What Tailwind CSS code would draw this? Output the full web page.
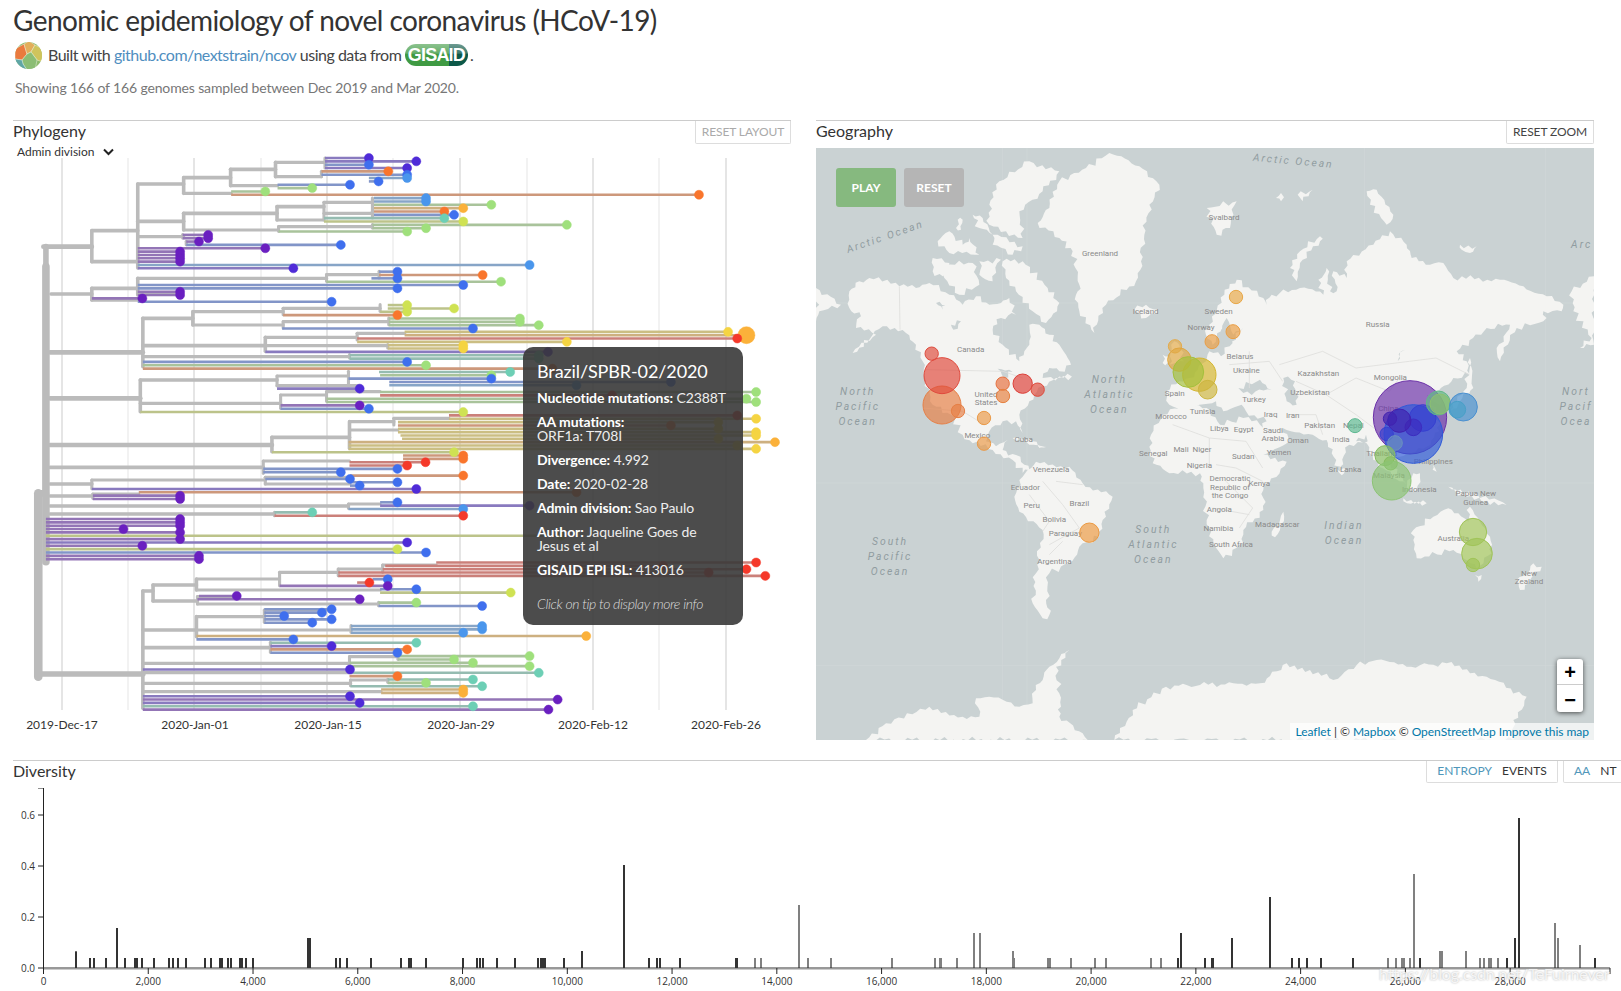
<!DOCTYPE html>
<html lang="en">
  <head>
    <meta charset="UTF-8" />
    <meta name="viewport" content="width=device-width, initial-scale=1.0" />
    <title>Genomic epidemiology of novel coronavirus (HCoV-19)</title>
    <script src="https://cdn.jsdelivr.net/npm/@tailwindcss/browser@4"></script>
  </head>
  <body class="bg-white font-['Lato',sans-serif] text-[#333] w-[1621px] h-[991px] overflow-hidden">
    <!-- Header -->
    <header class="pl-[13px]">
      <h1 class="h-[40px] flex items-center text-[28px] leading-none tracking-[-0.58px] text-[#333]">
        Genomic epidemiology of novel coronavirus (HCoV-19)
      </h1>
      <div class="h-[30px] flex items-center text-[16px] tracking-[-0.5px] text-[#444] pl-[2px]">
        <svg class="w-[27px] h-[27px] mr-[6px]" viewBox="0 0 27 27">
          <clipPath id="logo-clip"><circle cx="13.5" cy="13.5" r="13.5" /></clipPath>
          <g clip-path="url(#logo-clip)" stroke="#fff" stroke-width="0.4">
            <rect width="27" height="27" fill="#8dbb6c" />
            <polygon fill="#ea7a3e" points="0,7 9,2 12,12 7,18 0,17" />
            <polygon fill="#e2ae5a" points="9,2 14,-1 20,3 16,10 12,12" />
            <polygon fill="#cfc45c" points="20,3 28,7 28,20 22,18 16,10" />
            <polygon fill="#8bbd74" points="12,12 16,10 22,18 20,28 12,28 8,22 7,18" />
            <polygon fill="#5fa6a6" points="0,17 7,18 8,22 12,28 0,28" />
          </g>
        </svg>
        <span>Built with&nbsp;</span><a class="text-[#4f8ec0]">github.com/nextstrain/ncov</a><span>&nbsp;using data from&nbsp;</span>
        <span class="w-[63px] h-[22px] rounded-full flex items-center justify-center text-white font-bold text-[18px] font-['Liberation_Sans',sans-serif] tracking-[-0.8px] bg-[linear-gradient(180deg,#ffffff66_0%,#ffffff33_42%,#ffffff00_46%),linear-gradient(90deg,#3f9a43_70%,#0c5848_70%)]">GISAID</span>
        <span class="ml-[2px]">.</span>
      </div>
      <p class="h-[34px] flex items-center text-[14px] tracking-[-0.14px] text-[#777] pl-[2px]">
        Showing 166 of 166 genomes sampled between Dec 2019 and Mar 2020.
      </p>
    </header>

    <main class="mt-[16px] flex gap-[25px] pl-[13px] h-[620px]">
      <!-- Phylogeny panel -->
      <section class="relative w-[778px]">
        <div class="h-[28px] border-t border-[#ccc] flex justify-between items-start">
          <h2 class="text-[16px] leading-[20px]">Phylogeny</h2>
          <button class="h-[23px] w-[96px] border border-t-0 border-[#ddd] rounded-b-[2px] text-[12px] tracking-[-0.1px] text-[#aaa]">RESET LAYOUT</button>
        </div>
        <div class="absolute left-[4px] top-[23px] flex items-center gap-[9px] text-[12px] text-[#333]">
          Admin division
          <svg class="w-[11px] h-[8px]" viewBox="0 0 11 8"><path d="M1 1.5l4.5 4.5L10 1.5" fill="none" stroke="#222" stroke-width="2" /></svg>
        </div>
        <svg id="tree" class="block w-[778px] h-[592px]" viewBox="13 148 778 592"></svg>

        <!-- Tip hover tooltip -->
        <div class="absolute left-[510px] top-[227px] w-[220px] h-[278px] rounded-[10px] bg-[#393939]/90 px-[14px] pt-[13px] text-[14px] leading-[14px] tracking-[-0.1px] text-[#eee]">
          <div class="text-[18px] leading-[22px] text-white mb-[9px]">Brazil/SPBR-02/2020</div>
          <p class="mb-[10px] whitespace-nowrap"><b class="text-white">Nucleotide mutations:</b> C2388T</p>
          <p class="mb-[10px]"><b class="text-white">AA mutations:</b><br />ORF1a: T708I</p>
          <p class="mb-[10px]"><b class="text-white">Divergence:</b> 4.992</p>
          <p class="mb-[10px]"><b class="text-white">Date:</b> 2020-02-28</p>
          <p class="mb-[10px]"><b class="text-white">Admin division:</b> Sao Paulo</p>
          <p class="mb-[10px]"><b class="text-white">Author:</b> Jaqueline Goes de Jesus et al</p>
          <p class="mb-[20px]"><b class="text-white">GISAID EPI ISL:</b> 413016</p>
          <p class="italic font-light tracking-[-0.38px] text-[#ddd]">Click on tip to display more info</p>
        </div>
      </section>

      <!-- Geography panel -->
      <section class="relative w-[778px]">
        <div class="h-[28px] border-t border-[#ccc] flex justify-between items-start">
          <h2 class="text-[16px] leading-[20px]">Geography</h2>
          <button class="h-[23px] w-[88px] border border-t-0 border-[#ddd] rounded-b-[2px] text-[12px] tracking-[-0.1px] text-[#444]">RESET ZOOM</button>
        </div>
        <div class="relative w-[778px] h-[592px] bg-[#cad2d3] overflow-hidden">
          <svg id="map" class="block w-[778px] h-[592px]" viewBox="0 0 2334 1776"></svg>
          <div class="absolute left-[20px] top-[20px] flex gap-[8px]">
            <button class="w-[60px] h-[39px] rounded-[3px] bg-[#86b97f] text-white text-[12px] font-bold">PLAY</button>
            <button class="w-[60px] h-[39px] rounded-[3px] bg-[#b5b5b5] text-white text-[12px] font-bold">RESET</button>
          </div>
          <div class="absolute right-[11px] bottom-[28px] w-[26px] h-[53px] bg-white rounded-[3px] shadow-[0_1px_5px_rgba(0,0,0,0.65)] flex flex-col font-['Liberation_Sans',sans-serif] font-bold text-black text-[20px]">
            <span class="h-[26px] flex items-center justify-center border-b border-[#ccc]">+</span>
            <span class="flex-1 flex items-center justify-center">−</span>
          </div>
          <div class="absolute right-0 bottom-0 h-[17px] px-[5px] bg-white/70 text-[12px] leading-[17px] tracking-[-0.03px] text-[#333]">
            <a class="text-[#0078a8]">Leaflet</a> | © <a class="text-[#0078a8]">Mapbox</a> © <a class="text-[#0078a8]">OpenStreetMap</a> <a class="text-[#0078a8]">Improve this map</a>
          </div>
        </div>
      </section>
    </main>

    <!-- Diversity panel -->
    <section class="relative mt-[20px] ml-[13px] w-[1608px]">
      <div class="h-[28px] border-t border-[#ccc] flex items-start">
        <h2 class="text-[16px] leading-[20px]">Diversity</h2>
        <div class="ml-auto flex gap-[5px] text-[12px]">
          <div class="h-[22px] w-[132px] pb-[2px] border border-t-0 border-[#ddd] rounded-b-[2px] flex items-center justify-center gap-[10px]">
            <span class="text-[#5097ba]">ENTROPY</span><span class="text-[#333]">EVENTS</span>
          </div>
          <div class="h-[22px] w-[70px] pb-[2px] -mr-[12px] border border-t-0 border-[#ddd] rounded-b-[2px] flex items-center pl-[10px] gap-[10px]">
            <span class="text-[#5097ba]">AA</span><span class="text-[#333]">NT</span>
          </div>
        </div>
      </div>
      <svg id="entropy" class="absolute left-[-13px] top-[28px] w-[1621px] h-[203px]" viewBox="0 788 1621 203"></svg>
    </section>
    <div class="absolute left-[1379px] top-[962px] text-[16px] leading-[24px] tracking-[-0.1px] text-white/80 [text-shadow:0_0_2px_#aaa]">https://blog.csdn.net/TeFuirnever</div>

    <script>
      const NS = "http://www.w3.org/2000/svg";
      function add(parent, name, attrs, text) {
        const el = document.createElementNS(NS, name);
        for (const k in attrs) el.setAttribute(k, attrs[k]);
        if (text) el.textContent = text;
        parent.appendChild(el);
        return el;
      }

      // ---- Tree ----
      const P = "#6a1fc0", I = "#4f2bd8", B = "#3f6fee", L = "#4a96ec", T = "#6dcfb5",
        G = "#9fe07c", Y = "#cfe253", E = "#f5d442", A = "#fbb13a", O = "#f9752c", R = "#f5392a";

      // one entry per tip, top to bottom: [branch start, tip, colour]
      const tips = [
        [637,723,I],[637,816,I],[637,723,B],[637,798,I],[630,761,O],[630,798,B],[723,798,L],[723,742,B],[544,686,B],[544,612,G],
        [453,520,G],[453,1370,O],[733,835,L],[733,835,L],[733,963,G],[733,908,A],[733,871,O],[733,890,B],[635,871,T],[635,908,Y],
        [730,1111,G],[730,835,G],[546,798,G],[358,408,P],[358,408,P],[365,390,P],[365,668,B],[270,520,P],[270,353,P],[270,353,P],
        [270,353,P],[270,353,P],[270,1038,L],[270,575,I],[743,779,B],[743,946,O],[728,779,B],[640,982,G],[270,908,B],[270,779,B],
        [270,353,P],[270,353,P],[180,279,P],[270,650,B],[760,798,Y],[760,890,Y],[745,798,Y],[555,779,O],[762,1019,G],[762,1019,G],
        [762,1056,G],[553,927,B],[793,1427,E],[793,1463,A],[700,1445,R],[700,1111,E],[760,908,E],[760,908,E],[520,1074,I],[685,1056,T],
        [685,1056,T],[280,798,B],[280,835,G],[280,1083,O],[743,1000,T],[745,963,G],[683,963,B],[763,1315,B],[763,1130,L],[543,705,I],
        [745,1482,G],[745,1200,R],[640,1463,G],[640,1482,G],[550,705,P],[550,723,B],[275,908,Y],[880,1445,R],[880,1482,E],[780,1408,E],
        [780,1315,O],[780,1408,E],[780,1482,E],[785,1482,E],[788,1408,E],[683,1519,A],[683,1445,E],[683,1482,E],[533,890,Y],[790,908,O],
        [790,908,O],[685,834,R],[685,798,R],[516,779,B],[516,668,B],[686,908,O],[520,686,B],[686,779,B],[686,705,B],[180,816,I],
        [272,1130,O],[182,353,P],[182,353,P],[745,779,B],[745,1038,I],[683,908,L],[538,612,T],[538,908,R],[90,353,P],[90,353,P],
        [90,353,P],[90,242,P],[90,353,P],[90,1100,Y],[90,353,P],[90,798,I],[90,279,P],[90,779,Y],[90,835,B],[90,390,P],
        [90,390,P],[855,1482,R],[755,1300,R],[750,1463,R],[663,1389,R],[663,1500,R],[730,760,B],[700,724,R],[548,760,P],[745,816,B],
        [745,1001,Y],[390,464,P],[387,705,P],[742,816,G],[742,945,B],[518,650,B],[518,631,B],[518,557,B],[518,650,B],[518,612,B],
        [688,945,L],[688,945,L],[688,908,L],[385,1149,A],[385,575,B],[530,816,T],[530,650,I],[530,798,O],[530,779,B],[780,1038,G],
        [780,890,G],[685,927,G],[685,1038,G],[280,686,I],[685,1056,T],[685,779,O],[760,927,T],[760,835,G],[687,945,T],[747,908,A],
        [747,908,A],[280,686,I],[280,1093,P],[280,705,I],[280,927,T],[280,1075,P],
      ];

      // internal branches, drawn first: horizontal [y, x1, x2, width] and vertical [x, y1, y2, width]
      const hLines = [
        [1480,75,90,6],[2022,75,280,5],[740,85,180,4],[692,180,270,3],[785,180,270,3],[552,270,360,3],[664,270,360,3],[710,270,360,2.5],
        [533,360,452,3],[580,360,453,2.5],[508,452,540,3],[557,452,544,2.5],[487,540,637,2.5],[530,540,630,2.5],
        [640,360,543,3],[690,360,546,2.5],[620,543,635,3],[660,543,635,2.5],[607,635,730,2.5],[640,635,730,2.5],[680,546,730,2.5],
        [882,100,180,3],[865,180,270,3],[900,180,270,3],[835,270,640,2.5],[880,270,350,2.5],[824,640,743,2.5],
        [1057,98,280,4],[955,280,378,3],[1037,280,520,3],[1070,280,685,2.5],[935,378,555,2.5],[975,378,555,2.5],[925,555,745,2.5],[965,555,762,2.5],
        [1012,520,700,2.5],[1000,700,793,2.5],[1037,520,760,2.5],
        [1195,98,275,4],[1140,275,543,3],[1210,275,550,2.5],[1185,550,640,2.5],[1175,640,745,2.5],[1128,543,683,2.5],[1157,543,705,2.5],
        [1335,98,533,4],[1312,533,685,3],[1265,685,772,2.5],[1255,772,880,2.5],[1290,685,780,2.5],
        [1402,98,516,3],[1383,516,685,2.5],[1452,98,180,3],[1440,180,520,2.5],[1432,520,686,2.5],[1452,520,686,2.5],
        [1488,98,182,3],[1482,182,272,2.5],[1518,98,683,3],[1512,683,745,2.5],[1542,98,538,3],
        [1773,280,300,3],[1755,300,385,3],[1737,385,548,2.5],[1717,548,663,2.5],[1707,663,750,2.5],[1695,750,855,2.5],[1770,385,745,2.5],
        [1803,300,387,3],[1790,387,464,2.5],[1812,387,742,2.5],[1890,280,385,3],[1850,385,518,2.5],[1830,518,650,2.5],[1890,385,688,2.5],
        [1943,280,530,3],[1990,280,685,2.5],[1970,685,780,2.5],[2018,280,685,2.5],[2050,280,687,2.5],[2040,687,760,2.5],[2075,280,747,2.5],
      ];
      const vLines = [
        [75,1480,2030,8],[90,740,800,5],[90,800,1685,7],[180,692,785,3],[270,552,804,3],[360,533,580,3],[452,508,557,3],[540,487,530,3],[637,474,504,2.5],[630,514,530,2.5],
        [360,640,690,3],[543,620,660,3],[635,607,660,2.5],[730,594,634,2.5],[730,634,654,2.5],[546,680,694,2.5],[730,674,684,2.5],[358,704,714,2.5],[365,724,734,2.5],
        [180,865,900,3],[270,835,885,3],[640,824,844,2.5],[743,814,834,2.5],
        [280,955,1100,3],[378,935,975,3],[555,925,944,2.5],[745,914,934,2.5],[555,965,984,2.5],[762,954,974,2.5],[520,1012,1054,3],[700,1000,1020,2.5],[760,1034,1044,2.5],[685,1064,1074,2.5],
        [275,1140,1235,3],[550,1185,1225,2.5],[640,1175,1204,2.5],[543,1128,1157,2.5],[683,1114,1157,2.5],
        [533,1312,1355,3],[685,1265,1345,3],[772,1255,1275,2.5],[516,1383,1420,2.5],[180,1440,1466,2.5],[520,1432,1452,2.5],[182,1482,1495,2.5],[683,1512,1525,2.5],[538,1537,1547,2.5],
        [280,1773,2125,3],[300,1755,1803,3],[385,1737,1770,3],[548,1717,1757,2.5],[663,1707,1727,2.5],[750,1695,1717,2.5],[387,1790,1812,2.5],[742,1807,1817,2.5],
        [385,1850,1910,3],[518,1830,1867,2.5],[688,1877,1897,2.5],[530,1927,1957,2.5],[685,1970,1998,2.5],[780,1968,1978,2.5],[687,2040,2057,2.5],[760,2038,2047,2.5],
      ];

      const px = (x) => x / 1.96;
      const rowY = (r) => 158 + r * 3.343;

      // blend a tip colour towards gray for its branch
      function muted(hex) {
        const n = parseInt(hex.slice(1), 16);
        const mix = (v) => Math.round(v * 0.4 + 175 * 0.6);
        return `rgb(${mix(n >> 16)},${mix((n >> 8) & 255)},${mix(n & 255)})`;
      }

      const tree = document.getElementById("tree");
      const ticks = [
        [62, "#ddd"], [128, "#eee"], [194, "#ddd"], [261, "#eee"], [327, "#ddd"], [393, "#eee"],
        [460, "#ddd"], [527, "#eee"], [593, "#ddd"], [659, "#eee"], [726, "#ddd"],
      ];
      ticks.forEach(([x, c]) => add(tree, "line", { x1: x, x2: x, y1: 158, y2: 710, stroke: c, "stroke-width": 1.5 }));
      [["2019-Dec-17", 62], ["2020-Jan-01", 195], ["2020-Jan-15", 328], ["2020-Jan-29", 461], ["2020-Feb-12", 593], ["2020-Feb-26", 726]].forEach(([t, x]) =>
        add(tree, "text", { x, y: 729, "text-anchor": "middle", "font-size": 12, fill: "#333" }, t)
      );

      hLines.forEach(([y, a, b, w]) => add(tree, "line", { x1: px(a), x2: px(b), y1: y / 3, y2: y / 3, stroke: "#bbb", "stroke-width": w + 0.6, "stroke-linecap": "round" }));
      vLines.forEach(([x, a, b, w]) => add(tree, "line", { x1: px(x), x2: px(x), y1: a / 3, y2: b / 3, stroke: "#bbb", "stroke-width": w + 0.6, "stroke-linecap": "round" }));
      tips.forEach(([a, b, c], r) => add(tree, "line", { x1: px(a), x2: px(b), y1: rowY(r), y2: rowY(r), stroke: muted(c), "stroke-width": 2.6 }));
      tips.forEach(([a, b, c], r) => add(tree, "circle", { cx: px(b), cy: rowY(r), r: r === 53 ? 8.5 : 4.5, fill: c, stroke: c, "stroke-opacity": 0.5 }));

      // ---- Map ----
      // Coordinates are map pixels x3
      const land = [
        // North America
        "100,430 130,400 160,390 250,415 300,420 340,405 400,440 440,470 480,445 520,470 555,465 580,450 600,500 555,510 530,545 560,590 610,640 625,610 640,590 640,530 670,530 700,560 730,590 750,620 765,650 730,670 700,660 680,690 780,685 720,690 680,715 640,760 610,800 620,855 600,820 560,820 520,850 510,880 540,895 575,876 560,906 600,921 625,950 640,966 620,975 590,936 530,906 470,886 440,860 405,800 350,770 330,700 320,640 300,590 270,555 200,535 110,615 180,560 120,540 135,505 100,480",
        // Arctic Canada
        "350,330 400,345 380,385 350,370", "390,350 470,345 490,410 430,440 385,390", "560,340 620,340 695,420 730,465 690,525 650,490 600,430 570,390",
        "490,340 555,335 530,400 490,380", "550,100 640,40 730,70 680,130 610,190 620,270 520,230 520,170", "470,200 500,210 530,260 490,240",
        "365,280 400,250 440,290 460,270 490,320 400,315", "530,260 620,295 590,320 530,290", "425,215 440,215 435,245 420,240", "700,600 735,620 700,650",
        // Greenland, Iceland
        "665,225 700,180 730,100 810,60 880,15 970,55 1030,110 1000,170 985,260 975,340 960,400 870,470 835,555 790,490 780,440 790,410 770,310 730,270",
        "955,485 990,470 1025,485 990,510",
        // Eurasia
        "1262,395 1342,450 1352,470 1367,440 1452,420 1522,440 1507,395 1532,360 1542,430 1562,430 1552,370 1592,390 1592,340 1672,290 1722,250 1772,290 1787,330 1842,350 1882,345 1912,390 2052,395 2122,415 2192,445 2242,470 2237,490 2182,490 2182,520 2102,540 2052,640 2042,600 2082,530 2012,540 1922,610 1952,640 1962,680 1912,690 1867,730 1872,770 1832,740 1860,790 1870,850 1832,896 1752,926 1722,946 1772,1010 1750,1000 1672,936 1652,886 1600,890 1572,971 1547,916 1532,876 1490,860 1400,840 1420,880 1357,916 1330,860 1352,820 1290,790 1277,770 1222,790 1200,760 1150,770 1120,790 1082,780 1060,770 1050,730 1090,700 1120,690 1170,640 1180,610 1215,625 1250,585 1230,540 1190,590 1170,560 1180,530 1225,440",
        "1075,580 1090,590 1105,640 1060,650", "1040,620 1060,625 1055,645 1040,645",
        // Arctic islands
        "1172,180 1262,160 1242,240 1202,260", "1512,265 1452,310 1422,360 1442,400 1452,345 1512,280", "1652,130 1682,125 1732,200 1712,230 1662,170", "1932,290 1982,295 1962,315 1937,305", "1380,150 1395,135 1395,160", "1445,140 1490,125 1460,160",
        // Alaska/Chukotka seen again across the date line
        "2267,430 2334,385 2334,590 2292,600 2327,570 2272,490", "0,420 75,470 10,490 0,520",
        // Japan
        "1962,630 1972,720 1932,760 1902,790 1952,720",
        // Africa
        "1040,800 1100,770 1172,780 1212,830 1282,810 1332,830 1392,890 1342,920 1412,941 1342,1026 1342,1086 1282,1146 1282,1186 1222,1231 1192,1186 1172,1116 1162,1006 1152,976 1060,976 1010,946 1000,896 1005,860",
        // Madagascar
        "1367,1151 1402,1091 1392,1146 1377,1168",
        // South America
        "635,966 660,941 760,956 800,1006 890,1046 870,1106 850,1166 790,1196 760,1246 700,1276 690,1356 700,1401 680,1411 650,1366 660,1276 680,1146 610,1091 595,1046 620,986",
        // Australia, Tasmania, New Zealand
        "1792,1146 1852,1106 1897,1081 1927,1096 1957,1121 1962,1076 2022,1166 2027,1216 1982,1261 1942,1231 1912,1206 1802,1231 1792,1176",
        "1977,1281 1997,1281 1987,1301", "2152,1246 2177,1256 2142,1296 2112,1326 2102,1296 2142,1266",
        // SE Asian islands
        "1897,1016 1982,1036 2072,1071 2022,1071 1952,1046", "1792,976 1812,976 1802,1026 1772,1026", "1762,1051 1832,1066 1762,1060", "1852,951 1862,971 1850,965", "1560,961 1590,960 1585,975 1570,975",
        // Cuba, Hispaniola
        "590,870 650,880 690,900 640,890", "665,890 690,895 670,900",
        // Antarctica
        "150,1776 210,1726 340,1676 440,1706 490,1706 480,1651 520,1646 610,1676 650,1666 660,1626 680,1596 700,1556 760,1506 720,1556 735,1676 730,1706 800,1756 815,1776",
        "895,1776 950,1686 1050,1616 1152,1611 1252,1606 1332,1606 1412,1546 1482,1566 1552,1596 1622,1551 1682,1536 1772,1556 1892,1546 2012,1586 2132,1646 2092,1716 2092,1776",
      ];
      const water = [
        "1267,720 1332,695 1367,725 1282,735", "1402,690 1437,700 1442,770 1412,760", "1202,570 1232,510 1252,560 1282,540 1237,590 1202,600", "1620,880 1650,860 1655,880",
        "360,465 388,472 380,485", "405,530 435,520 412,545", "545,662 590,672 565,690", "1755,610 1768,605 1745,640",
      ];
      const borders = [
        "250,415 252,545", "330,665 560,670 620,690", "320,780 440,790 505,830", "1390,650 1520,610 1620,660 1700,650 1780,640 1860,630 1960,680",
        "1440,700 1530,740 1620,690 1720,730 1750,690", "1530,740 1620,800 1700,860", "1420,800 1500,800 1520,860", "1240,650 1360,640 1400,700", "1300,610 1300,720",
        "1070,830 1180,870 1180,960", "1180,870 1290,880 1340,960", "1200,950 1260,960 1340,1000", "1230,1000 1310,1080 1270,1140", "1190,1080 1300,1100",
        "680,1000 740,1070 790,1140 700,1190", "640,1040 700,1120 680,1150", "700,1220 740,1180", "720,1000 800,1010",
      ];

      // break straight edges up so coastlines aren't ruler lines
      function roughen(str) {
        const pts = str.split(" ").map((p) => p.split(",").map(Number));
        const out = [];
        pts.forEach(([x1, y1], i) => {
          const [x2, y2] = pts[(i + 1) % pts.length];
          const len = Math.hypot(x2 - x1, y2 - y1);
          const n = Math.max(1, Math.ceil(len / 14));
          for (let j = 0; j < n; j++) {
            const x = x1 + ((x2 - x1) * j) / n;
            const y = y1 + ((y2 - y1) * j) / n;
            const w = j === 0 ? 0 : Math.sin(x * 0.23 + y * 0.11) * 5 + Math.sin(x * 0.07 - y * 0.29) * 5;
            out.push(`${(x - ((y2 - y1) / len) * w).toFixed(1)},${(y + ((x2 - x1) / len) * w).toFixed(1)}`);
          }
        });
        return out.join(" ");
      }

      const mapSvg = document.getElementById("map");
      [[633, "v"], [1646, "v"], [2188, "v"], [560, "v"], [1005, "h"], [1552, "h"], [465, "h"]].forEach(([v, k]) =>
        add(mapSvg, "line", k === "v" ? { x1: v, x2: v, y1: 0, y2: 1776, stroke: "#d1d8d9", "stroke-width": 2 } : { x1: 0, x2: 2334, y1: v, y2: v, stroke: "#d1d8d9", "stroke-width": 2 })
      );
      land.forEach((points) => add(mapSvg, "polygon", { points: roughen(points), fill: "#f4f4f2" }));
      water.forEach((points) => add(mapSvg, "polygon", { points: roughen(points), fill: "#cad2d3" }));
      borders.forEach((points) => add(mapSvg, "polyline", { points, fill: "none", stroke: "#dededc", "stroke-width": 2.5 }));

      // Country labels: [x, y, text]
      const countries = [
        [852,315,"Greenland"],[464,604,"Canada"],[989,488,"Iceland"],[510,737,"United"],[510,763,"States"],[484,860,"Mexico"],[623,873,"Cuba"],
        [1076,736,"Spain"],[1065,803,"Morocco"],[1160,790,"Tunisia"],[1155,538,"Norway"],[1224,208,"Svalbard"],[1208,489,"Sweden"],[1685,529,"Russia"],
        [1272,625,"Belarus"],[1291,666,"Ukraine"],[1507,676,"Kazakhstan"],[1723,688,"Mongolia"],[1482,731,"Uzbekistan"],[1314,753,"Turkey"],[1364,797,"Iraq"],
        [1430,801,"Iran"],[1511,832,"Pakistan"],[1612,832,"Nepal"],[1575,872,"India"],[1717,780,"China"],[1210,839,"Libya"],[1283,844,"Egypt"],[1371,847,"Saudi"],
        [1371,871,"Arabia"],[1446,877,"Oman"],[1012,916,"Senegal"],[1095,902,"Mali"],[1158,903,"Niger"],[1150,951,"Nigeria"],[705,963,"Venezuela"],[628,1016,"Ecuador"],
        [647,1070,"Peru"],[790,1066,"Brazil"],[715,1113,"Bolivia"],[748,1154,"Paraguay"],[715,1238,"Argentina"],[1389,912,"Yemen"],[1282,924,"Sudan"],[1587,963,"Sri Lanka"],
        [1242,991,"Democratic"],[1242,1016,"Republic of"],[1242,1041,"the Congo"],[1330,1006,"Kenya"],[1210,1083,"Angola"],[1207,1140,"Namibia"],[1245,1188,"South Africa"],
        [1384,1129,"Madagascar"],[1810,1023,"Indonesia"],[1719,981,"Malaysia"],[1697,916,"Thailand"],[1852,938,"Philippines"],[1979,1036,"Papua New"],[1979,1061,"Guinea"],
        [1912,1169,"Australia"],[2139,1275,"New"],[2139,1300,"Zealand"],
      ];

      // Ocean labels: [x, y, text]
      const oceans = [
        [125,730,"North"],[125,775,"Pacific"],[125,820,"Ocean"],[880,695,"North"],[880,740,"Atlantic"],[880,785,"Ocean"],
        [2280,730,"Nort"],[2280,775,"Pacif"],[2280,820,"Ocea"],[222,1179,"South"],[222,1224,"Pacific"],[222,1269,"Ocean"],
        [1012,1144,"South"],[1012,1189,"Atlantic"],[1012,1234,"Ocean"],[1584,1131,"Indian"],[1584,1176,"Ocean"],[2297,290,"Arc"],
      ];
      const font = "Roboto, sans-serif";
      function label(x, y, text, size, fill, extra) {
        add(mapSvg, "text", { x, y: y + size * 0.36, "text-anchor": "middle", "font-family": font, "font-size": size, fill, ...extra }, text);
      }
      oceans.forEach(([x, y, t]) => label(x, y, t, 31, "#909ca0", { "font-style": "italic", "letter-spacing": 6 }));
      label(207, 265, "Arctic Ocean", 31, "#909ca0", { "font-style": "italic", "letter-spacing": 6, transform: "rotate(-19 207 265)" });
      label(1432, 38, "Arctic Ocean", 31, "#909ca0", { "font-style": "italic", "letter-spacing": 6, transform: "rotate(5 1432 38)" });
      countries.forEach(([x, y, t]) => label(x, y, t, 24, "#8a8a8a", {}));

      // Case bubbles, back to front: [x, y, radius, colour]
      const bubbles = [
        [347,617,20,"#df4b3c"],[378,771,57,"#e67f45"],[378,683,54,"#e04a3d"],[426,789,20,"#e67f45"],[560,707,20,"#e6703f"],[561,744,20,"#e6803f"],[620,707,29,"#dd3f38"],[665,725,20,"#df4b3c"],
        [504,810,20,"#ea9a48"],[504,887,20,"#ea9a48"],[1077,595,20,"#e5ab4a"],[1090,635,35,"#e0a640"],[1150,680,50,"#d4b62e"],[1175,725,28,"#cdb640"],[1117,672,46,"#a4c03c"],
        [1260,447,20,"#e8a848"],[1251,551,21,"#ea9e44"],[1188,581,21,"#ea9e44"],
        [1782,808,110,"#6a2fa8"],[1792,858,88,"#2f5ad8"],[1820,810,40,"#3640d0"],[1792,838,25,"#3c2cc0"],[1750,818,35,"#4022b0"],[1722,812,20,"#4022b0"],[1712,858,20,"#3640d0"],[1737,885,22,"#6a90c0"],
        [1867,765,36,"#62b888"],[1872,768,30,"#8cc070"],[1942,777,42,"#4a90d0"],[1924,785,25,"#48a0c8"],[1617,833,21,"#5cb890"],[1707,923,30,"#84bc60"],[1724,946,20,"#84bc60"],[1727,998,58,"#8cc474"],
        [1971,1152,41,"#a0c458"],[1983,1217,46,"#a0c458"],[1971,1251,20,"#a0c458"],[820,1154,29,"#ec9a42"],
      ];
      bubbles.forEach(([cx, cy, r, c]) => add(mapSvg, "circle", { cx, cy, r, fill: c, "fill-opacity": 0.68, stroke: c, "stroke-width": 3 }));

      // ---- Entropy chart ----
      // bars: [x, height, colour]; most positions only have the base height of 10px
      const DARK = "#333", GRAY = "#808080";
      const bars = [];
      const bx1 = (z) => z / 1.933;
      const bx2 = (z) => 810 + z / 1.933;
      [[147,16.7],[226,40],[596,30],[599,30],[1125,17],[1207,103]].forEach(([z, h]) => bars.push([bx1(z), h, DARK]));
      bars.push([bx1(1545), 63, GRAY]);
      [174,182,205,242,261,265,274,297,327,335,344,360,396,407,425,430,441,446,463,468,475,490,649,657,670,718,775,790,795,824,895,922,927,934,961,996,1040,1045,1050,1054,1090,1255,1270,1276,1315,1423,1425].forEach((z) => bars.push([bx1(z), 10, DARK]));
      [1460,1471,1562].forEach((z) => bars.push([bx1(z), 10, GRAY]));
      [40,158,241,251,254,284,395,461,463,505,550,573,660,678,1118,1133,1145,1149,1160,1295,1303,1312,1316,1330].forEach((z) => bars.push([bx2(z), 10, GRAY]));
      [[317,35],[328,35],[392,17],[1168,94],[1218,17],[1222,17],[1269,17],[1441,45],[1445,30],[1488,23]].forEach(([z, h]) => bars.push([bx2(z), h, GRAY]));
      [712,764,777,779,931,945,961,988,1050,1179,1348,1517].forEach((z) => bars.push([bx2(z), 10, DARK]));
      [[717,35],[815,30],[889,71],[1363,30],[1370,150]].forEach(([z, h]) => bars.push([bx2(z), h, DARK]));

      const chart = document.getElementById("entropy");
      bars.forEach(([x, h, c]) => add(chart, "rect", { x: Math.round(x) - 1, y: 968 - h, width: 2, height: h, fill: c }));
      add(chart, "line", { x1: 43.5, x2: 1610, y1: 968, y2: 968, stroke: "#333", "stroke-width": 1 });
      add(chart, "line", { x1: 43.5, x2: 1610, y1: 969, y2: 969, stroke: "#999", "stroke-width": 1 });
      add(chart, "line", { x1: 43.5, x2: 43.5, y1: 788, y2: 968, stroke: "#222", "stroke-width": 1 });
      add(chart, "line", { x1: 38, x2: 43.5, y1: 788, y2: 788, stroke: "#222", "stroke-width": 1 });
      add(chart, "line", { x1: 1610, x2: 1610, y1: 968, y2: 974, stroke: "#222", "stroke-width": 1 });
      [["0.6", 815], ["0.4", 866], ["0.2", 917], ["0.0", 968]].forEach(([t, y]) => {
        add(chart, "line", { x1: 38, x2: 43.5, y1: y, y2: y, stroke: "#222", "stroke-width": 1 });
        add(chart, "text", { x: 35, y: y + 3.5, "text-anchor": "end", "font-size": 10, "font-family": "'Open Sans', sans-serif", fill: "#333" }, t);
      });
      for (let k = 0; k <= 28000; k += 2000) {
        const x = 43.5 + k * 0.05238;
        add(chart, "line", { x1: x, x2: x, y1: 968, y2: 974, stroke: "#222", "stroke-width": 1 });
        add(chart, "text", { x, y: 985, "text-anchor": "middle", "font-size": 10, "font-family": "'Open Sans', sans-serif", fill: "#333" }, k.toLocaleString("en-US"));
      }
    </script>
  </body>
</html>
